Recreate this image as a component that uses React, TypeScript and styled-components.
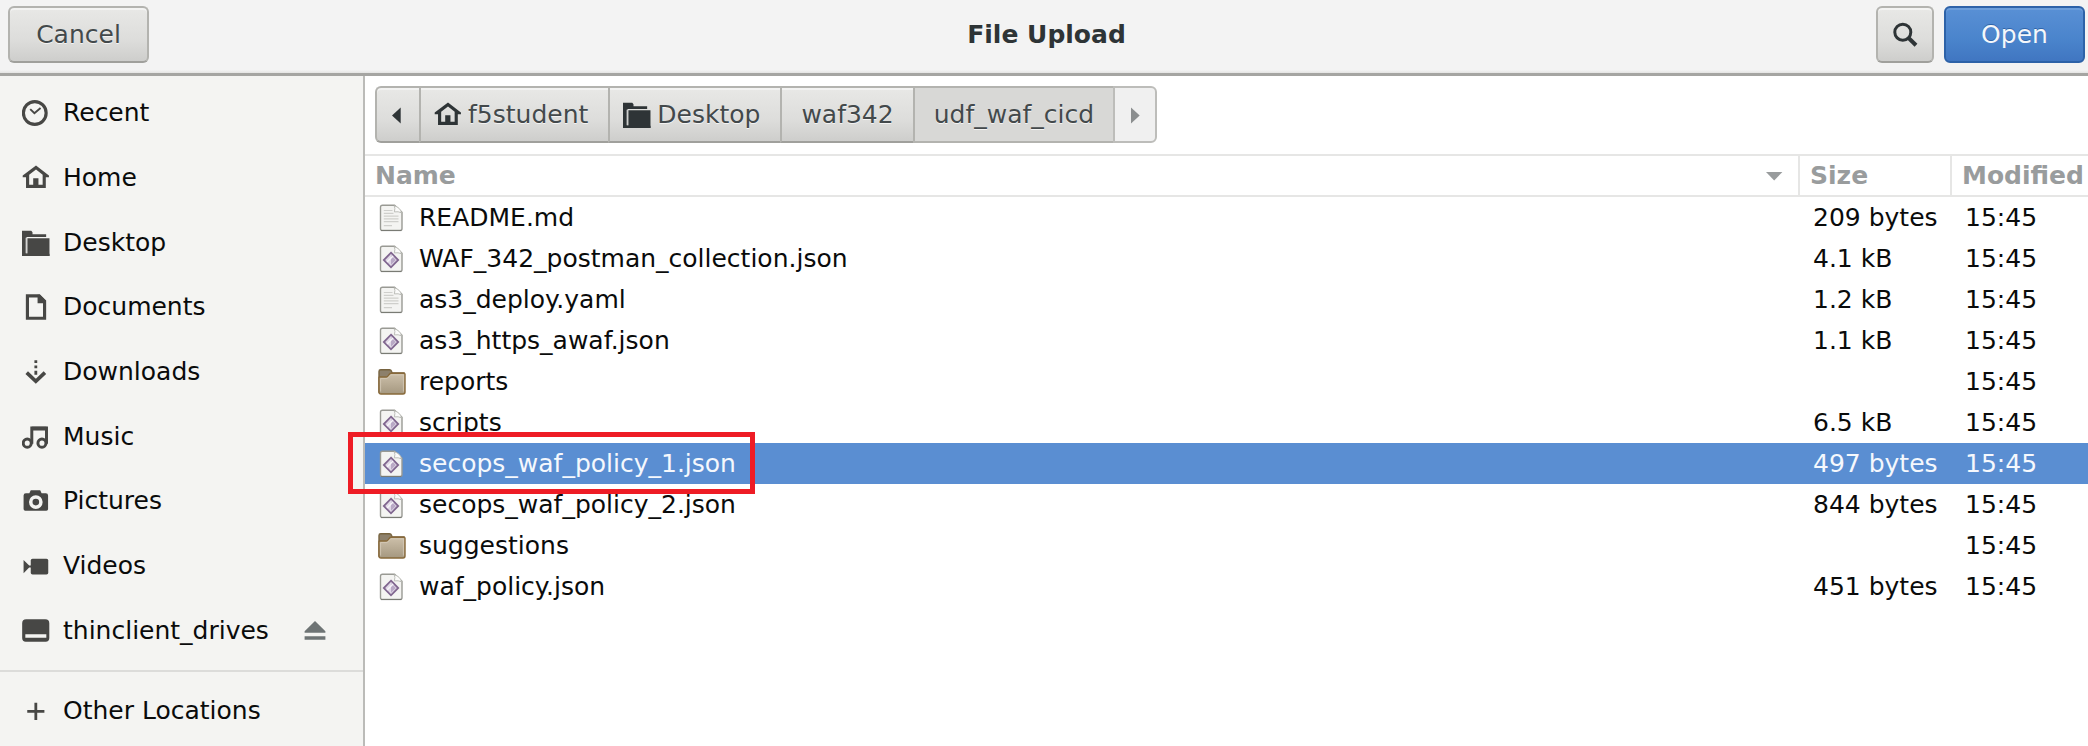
import React from "react";
import styled, { createGlobalStyle, css } from "styled-components";

const GlobalStyle = createGlobalStyle`
  *, *::before, *::after { box-sizing: border-box; }
  html, body { margin: 0; padding: 0; background: #ffffff; }
  body, button, table {
    font-family: "DejaVu Sans", sans-serif;
    font-size: 25px;
    line-height: 30px;
  }
  button { margin: 0; padding: 0; border: 0; background: none; color: inherit; cursor: pointer; }
`;

const Dialog = styled.div`
  min-height: 100vh;
  display: flex;
  flex-direction: column;
  color: #0a0b0b;
  overflow: hidden;
`;

const HeaderBar = styled.header`
  display: grid;
  grid-template-columns: 1fr auto 1fr;
  align-items: center;
  height: 76px;
  padding: 0 3px 4px 8px;
  background: linear-gradient(#f3f3f3 0, #f3f3f3 70px, #e4e4e3 73px);
  border-bottom: 3px solid #a5a5a2;
`;

const Title = styled.h1`
  margin: 0;
  font-size: 25px;
  line-height: 30px;
  font-weight: bold;
  color: #2e3436;
`;

const HeaderActions = styled.div`
  display: flex;
  justify-content: flex-end;
  gap: 10px;
`;

const raised = css`
  background: linear-gradient(#e8e8e6, #dddddb 60%, #cececc);
  box-shadow: inset 0 2px 0 #f3f3f2;
  color: #43494b;
  text-shadow: 0 1px 0 #f4f4f3;
`;

const HeaderButton = styled.button<{ $suggested?: boolean; $square?: boolean }>`
  display: flex;
  align-items: center;
  justify-content: center;
  justify-self: start;
  width: ${(p) => (p.$square ? 58 : 141)}px;
  height: 57px;
  border: 2px solid #b3b3af;
  border-bottom-color: #a0a09c;
  border-radius: 6px;
  ${raised}
  ${(p) =>
    p.$suggested &&
    css`
      background: linear-gradient(#5990d5, #4a84cc 60%, #4076c1);
      border-color: #2d62a8;
      box-shadow: inset 0 2px 0 #6c9edb;
      color: #f4f7fb;
      text-shadow: 0 -1px 0 #2f64a8;
    `}
`;

const Body = styled.div`
  flex: 1;
  display: flex;
`;

const Sidebar = styled.nav`
  flex: none;
  width: 365px;
  background: #f4f4f2;
  border-right: 2px solid #bbbbb8;
`;

const PlaceList = styled.ul`
  display: grid;
  grid-template-rows: repeat(9, 1fr);
  height: 582px;
  margin: 5px 0 7px;
  padding: 0;
  list-style: none;
`;

const PlaceRow = styled.li`
  display: flex;
  align-items: center;
  padding-right: 34px;
`;

const Place = styled.button`
  flex: 1;
  display: flex;
  align-items: center;
  gap: 13px;
  padding-left: 22px;
  text-align: left;
  white-space: nowrap;
`;

const OtherPlaces = styled.div`
  border-top: 2px solid #dcdcda;
  padding: 24px 0 16px;
  display: flex;
`;

const Icon = styled.svg`
  flex: none;
  display: block;
  width: 28px;
  height: 28px;
`;

const PlaceIcon = styled(Icon)`
  color: #474745;
`;

const EjectButton = styled.button`
  color: #6e7475;
`;

const Content = styled.main`
  flex: 1;
  min-width: 0;
`;

const PathBar = styled.nav`
  display: flex;
  padding: 10px 10px 11px;
`;

const pathPadding = { icon: "0 7px", place: "0 20px 0 13px", end: "0 6px", text: "0 19px" };

const PathButton = styled.button<{ $kind?: keyof typeof pathPadding; $current?: boolean }>`
  display: flex;
  align-items: center;
  justify-content: center;
  gap: 6px;
  height: 57px;
  padding: ${(p) => pathPadding[p.$kind ?? "text"]};
  border: 2px solid #b3b3af;
  border-bottom-color: #a0a09c;
  border-right-width: 0;
  ${raised}
  &:first-child { border-radius: 6px 0 0 6px; }
  &:last-child { border-right-width: 2px; border-radius: 0 6px 6px 0; }
  ${(p) =>
    p.$current &&
    css`
      background: #d8d8d6;
      box-shadow: none;
      border-bottom-color: #b3b3af;
    `}
  ${(p) =>
    p.$kind === "end" &&
    css`
      background: #f0f0f0;
      box-shadow: none;
      border-color: #bdbdba;
      color: #8b8e8f;
    `}
`;

const PathIcon = styled(Icon)`
  color: #2e3436;
`;

const FileTable = styled.table`
  width: 100%;
  table-layout: fixed;
  border-collapse: separate;
  border-spacing: 0;
`;

const NameCol = styled.col``;
const SizeCol = styled.col`
  width: 152px;
`;
const ModifiedCol = styled.col`
  width: 138px;
`;

const HeadCell = styled.th`
  height: 43px;
  padding: 0 0 0 10px;
  border: solid #e6e6e5;
  border-width: 2px 0 2px 2px;
  text-align: left;
  color: #999c9d;
  &:first-child { border-left-width: 0; }
`;

const SortButton = styled.button`
  display: flex;
  align-items: center;
  justify-content: space-between;
  width: 100%;
  padding-right: 10px;
  font-weight: bold;
`;

const FileRow = styled.tr<{ $selected?: boolean }>`
  ${(p) =>
    p.$selected &&
    css`
      background: #5a8ed2;
      color: #f5f8fd;
    `}
`;

const Cell = styled.td`
  position: relative;
  height: 41px;
  padding: 0 0 0 13px;
  white-space: nowrap;
  & + & { padding-left: 15px; }
`;

const FileName = styled.div`
  display: flex;
  align-items: center;
  gap: 13px;
`;

const Highlight = styled.div`
  position: absolute;
  z-index: 1;
  top: -11px;
  bottom: -10px;
  left: -17px;
  width: 407px;
  border: 5px solid #ee1c25;
  pointer-events: none;
`;

const HomeShape = () => (
  <g>
    <path d="M8 .9 15.4 6.6V7.6H13.6V13.7H2.3V7.6H.4V6.6ZM8 3.1 4.1 6.2V11.9H6.4V8.1H9.4V11.9H11.8V6.2Z" fill="currentColor" fillRule="evenodd" />
  </g>
);

const FolderShape = () => (
  <g fill="currentColor">
    <path d="M0 1H5.3L6 1.8V3H13.8V4.5H2.6V14.1H15.7V15.4H0Z" />
    <path d="M3.1 5.3H15.7V15.4H2.2V14H3.1Z" />
    <path d="M2.4 5V13.8" stroke="#ededeb" strokeWidth=".6" fill="none" />
  </g>
);

const placeShapes: Record<string, React.ReactNode> = {
  recent: (
    <g fill="none" stroke="currentColor">
      <circle cx="7.3" cy="8" r="6.5" strokeWidth="1.8" />
      <path d="M4.7 5.8 7.1 8.1 10.6 5.2" strokeWidth="1.1" />
    </g>
  ),
  home: <HomeShape />,
  desktop: <FolderShape />,
  documents: (
    <g>
      <path d="M3.1 1.6H9.8L12.9 4.7V14.4H3.1Z" fill="none" stroke="currentColor" strokeWidth="1.8" />
      <path d="M8.9 1H10.2L13.7 4.5V5.8H8.9Z" fill="currentColor" />
    </g>
  ),
  downloads: (
    <g fill="currentColor">
      <path d="M7.1 1.3H8.7V2.9H7.1ZM7.1 4.3H8.7V5.9H7.1ZM7.1 7.3H8.7V9.5H7.1Z" />
      <path d="M2.7 8.4 7.9 13.3 13.1 8.4" fill="none" stroke="currentColor" strokeWidth="2.1" />
    </g>
  ),
  music: (
    <g fill="none" stroke="currentColor" strokeWidth="1.7">
      <circle cx="3" cy="11.5" r="2.3" />
      <circle cx="11.4" cy="11.5" r="2.3" />
      <path d="M5.6 11.8V2.8H14V11.8" />
      <path d="M5.6 3.2H14" strokeWidth="2.2" />
    </g>
  ),
  pictures: (
    <path
      fill="currentColor"
      fillRule="evenodd"
      d="M5 1.9H10.4L11.2 3.5H13.6Q14.9 3.5 14.9 4.8V12.6Q14.9 13.6 13.9 13.6H1.9Q.9 13.6.9 12.6V4.8Q.9 3.5 2.2 3.5H4.2ZM7.9 4.7A3.9 3.9 0 1 0 7.9 12.5A3.9 3.9 0 1 0 7.9 4.7ZM7.9 6.7A1.9 1.9 0 1 1 7.9 10.5A1.9 1.9 0 1 1 7.9 6.7Z"
    />
  ),
  videos: (
    <g fill="currentColor">
      <rect x="5" y="3.8" width="10" height="9" rx="1" />
      <path d="M.9 4.5 4.1 7.7H5.5V8.9H4.1L.9 12.1Z" />
    </g>
  ),
  drive: (
    <path
      fill="currentColor"
      fillRule="evenodd"
      d="M2.4 1.3H13.3Q15.6 1.3 15.6 3.6V12Q15.6 14.1 13.5 14.1H2.2Q.1 14.1.1 12V3.6Q.1 1.3 2.4 1.3ZM1.9 9.9V11.9H13.9V9.9Z"
    />
  ),
  plus: <path d="M7.9 3.3V13.1M3 8.2H12.8" fill="none" stroke="currentColor" strokeWidth="1.6" />,
};

const FileIcon = ({ kind }: { kind: string }) => (
  <Icon viewBox="0 0 28 28" aria-hidden="true">
    {kind === "folder" ? (
      <g>
        <defs>
          <linearGradient id="folderFront" x1="0" y1="0" x2="0" y2="1">
            <stop offset="0" stopColor="#cdc0aa" />
            <stop offset="1" stopColor="#a59880" />
          </linearGradient>
        </defs>
        <path d="M1 24V3.5Q1 1.8 2.7 1.8H11.5Q13 1.8 13.5 3.3L14.2 5H26V24Z" fill="#8d806b" stroke="#77633f" strokeWidth="1.4" />
        <path d="M1 24V9.5Q1 9 2 9H8.4Q9.3 9 9.9 8.2L11.6 6Q12.1 5.3 13 5.3H26Q27 5.3 27 6.3V24Q27 26 25 26H3Q1 26 1 24Z" fill="url(#folderFront)" stroke="#88693a" strokeWidth="1.4" />
        <path d="M2.6 23.6V10.6H9.2L12.7 6.9H25.4V23.6" fill="none" stroke="#d6ccb9" strokeWidth=".8" />
      </g>
    ) : (
      <g>
        <path d="M4.5 1.3H16.5L24 8.4V24.5Q24 26.4 22 26.4H4.5Q2.5 26.4 2.5 24.5V3.3Q2.5 1.3 4.5 1.3Z" fill="#f4f4f2" stroke="#999a94" strokeWidth="1.4" />
        <path d="M3 26.6H23.4" stroke="#777871" strokeWidth="1" />
        <path d="M16.2 1.8Q17.5 4 16.4 7.9Q20.3 7.2 23.5 8.8Q22.3 3.4 16.2 1.8Z" fill="#fbfbfa" stroke="#b7b8b2" strokeWidth=".9" />
        {kind === "text" ? (
          <path d="M5.8 6.5H14.5M5.8 9.3H15.5M5.8 12.1H20.5M5.8 14.9H20.5M5.8 17.7H20.5M5.8 21.6H14" stroke="#cfcfcc" strokeWidth="1.2" />
        ) : (
          <g>
            <path d="M13 7.7 20.2 15 13 22.3 5.8 15Z" fill="#e0d8e6" stroke="#80668f" strokeWidth="1.8" />
            <path d="M13 10.2 17.8 15 13 19.8Z" fill="#b9a9c6" />
            <path d="M9 17 15 11" stroke="#f7f4f9" strokeWidth="1.6" />
          </g>
        )}
      </g>
    )}
  </Icon>
);

const places = [
  ["recent", "Recent"],
  ["home", "Home"],
  ["desktop", "Desktop"],
  ["documents", "Documents"],
  ["downloads", "Downloads"],
  ["music", "Music"],
  ["pictures", "Pictures"],
  ["videos", "Videos"],
  ["drive", "thinclient_drives"],
];

const files = [
  { kind: "text", name: "README.md", size: "209 bytes" },
  { kind: "json", name: "WAF_342_postman_collection.json", size: "4.1 kB" },
  { kind: "text", name: "as3_deploy.yaml", size: "1.2 kB" },
  { kind: "json", name: "as3_https_awaf.json", size: "1.1 kB" },
  { kind: "folder", name: "reports", size: "" },
  { kind: "json", name: "scripts", size: "6.5 kB" },
  { kind: "json", name: "secops_waf_policy_1.json", size: "497 bytes", selected: true },
  { kind: "json", name: "secops_waf_policy_2.json", size: "844 bytes" },
  { kind: "folder", name: "suggestions", size: "" },
  { kind: "json", name: "waf_policy.json", size: "451 bytes" },
];

const PlaceButton = ({ icon, label }: { icon: string; label: string }) => (
  <Place type="button">
    <PlaceIcon viewBox="0 0 16 16" aria-hidden="true">
      {placeShapes[icon]}
    </PlaceIcon>
    {label}
  </Place>
);

export default function App() {
  return (
    <Dialog>
      <GlobalStyle />
      <HeaderBar>
        <HeaderButton type="button">Cancel</HeaderButton>
        <Title>File Upload</Title>
        <HeaderActions>
          <HeaderButton type="button" $square aria-label="Search">
            <PathIcon viewBox="0 0 28 28" aria-hidden="true">
              <circle cx="11.8" cy="11.2" r="8" fill="none" stroke="currentColor" strokeWidth="3" />
              <path d="M17.6 17 25 24.2" stroke="currentColor" strokeWidth="4" />
            </PathIcon>
          </HeaderButton>
          <HeaderButton type="button" $suggested>
            Open
          </HeaderButton>
        </HeaderActions>
      </HeaderBar>
      <Body>
        <Sidebar aria-label="Places">
          <PlaceList>
            {places.map(([icon, label]) => (
              <PlaceRow key={label}>
                <PlaceButton icon={icon} label={label} />
                {icon === "drive" && (
                  <EjectButton type="button" aria-label="Eject">
                    <Icon viewBox="0 0 28 28" aria-hidden="true">
                      <path d="M14 4 24.4 14.3V15.8H3.6V14.3ZM3.6 19.2H24.4V22.8H3.6Z" fill="currentColor" />
                    </Icon>
                  </EjectButton>
                )}
              </PlaceRow>
            ))}
          </PlaceList>
          <OtherPlaces>
            <PlaceButton icon="plus" label="Other Locations" />
          </OtherPlaces>
        </Sidebar>
        <Content>
          <PathBar aria-label="Path">
            <PathButton type="button" $kind="icon" aria-label="Back">
              <PathIcon viewBox="0 0 28 28" aria-hidden="true">
                <path d="M8 14.5 16.7 6.4V22.6Z" fill="currentColor" />
              </PathIcon>
            </PathButton>
            <PathButton type="button" $kind="place">
              <PathIcon viewBox="0 0 16 16" aria-hidden="true">
                <HomeShape />
              </PathIcon>
              f5student
            </PathButton>
            <PathButton type="button" $kind="place">
              <PathIcon viewBox="0 0 16 16" aria-hidden="true">
                <FolderShape />
              </PathIcon>
              Desktop
            </PathButton>
            <PathButton type="button">waf342</PathButton>
            <PathButton type="button" $current aria-current="location">
              udf_waf_cicd
            </PathButton>
            <PathButton type="button" $kind="end" aria-label="Forward">
              <Icon viewBox="0 0 28 28" aria-hidden="true">
                <path d="M18.7 14.5 10 6.4V22.6Z" fill="currentColor" />
              </Icon>
            </PathButton>
          </PathBar>
          <FileTable>
            <colgroup>
              <NameCol />
              <SizeCol />
              <ModifiedCol />
            </colgroup>
            <thead>
              <tr>
                <HeadCell scope="col" aria-sort="ascending">
                  <SortButton type="button">
                    Name
                    <Icon viewBox="0 0 28 28" aria-hidden="true">
                      <path d="M6 10H22.4L14.2 18.6Z" fill="currentColor" />
                    </Icon>
                  </SortButton>
                </HeadCell>
                <HeadCell scope="col">
                  <SortButton type="button">Size</SortButton>
                </HeadCell>
                <HeadCell scope="col">
                  <SortButton type="button">Modified</SortButton>
                </HeadCell>
              </tr>
            </thead>
            <tbody>
              {files.map((f) => (
                <FileRow key={f.name} $selected={f.selected} aria-selected={!!f.selected}>
                  <Cell>
                    <FileName>
                      <FileIcon kind={f.kind} />
                      {f.name}
                    </FileName>
                    {f.selected && <Highlight />}
                  </Cell>
                  <Cell>{f.size}</Cell>
                  <Cell>15:45</Cell>
                </FileRow>
              ))}
            </tbody>
          </FileTable>
        </Content>
      </Body>
    </Dialog>
  );
}
